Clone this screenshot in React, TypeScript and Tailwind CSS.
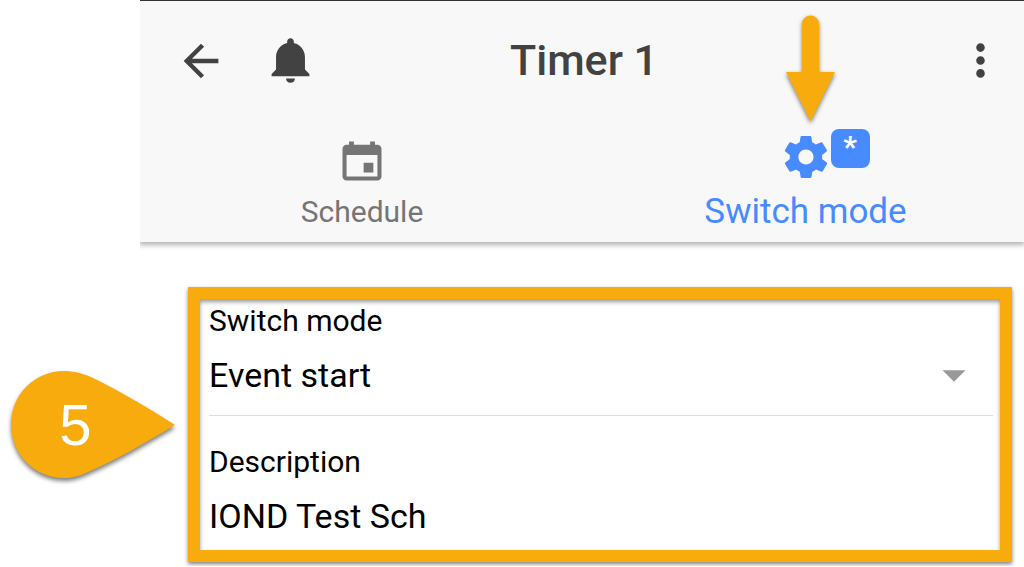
import React, { useState } from 'react';
import {
  IoMdArrowBack,
  IoMdArrowDropdown,
  IoMdCalendar,
  IoMdMore,
  IoMdNotifications,
  IoMdSettings,
} from 'react-icons/io';

const MODES = ['Event start', 'Event end', 'Event start and end'];

function Pointer() {
  return (
    <svg
      className="absolute top-3 right-[184px] h-[116px] w-[58px] drop-shadow-[0_2px_2px_rgba(0,0,0,0.5)]"
      viewBox="0 0 58 116"
      fill="#f8ab0c"
      aria-hidden="true"
    >
      <path d="M20 59V11a8.500 8.500 0 0 1 17 0v48h16L28.500 108.500 4 59z" />
    </svg>
  );
}

function StepMarker({ step }: { step: number }) {
  return (
    <div className="relative z-10 flex h-[110px] w-[166px] shrink-0 items-center">
      <svg
        className="absolute inset-0 h-full w-full drop-shadow-[0_3px_2px_rgba(0,0,0,0.5)]"
        viewBox="0 0 166 110"
        fill="#f8ab0c"
        aria-hidden="true"
      >
        <path d="M54 1C24 1 1 25 1 54.500S24 108 54 108c8 0 15-2 24-6 30-13 57-29 87-47C137 37 106 19 81 7 71 3 63 1 54 1z" />
      </svg>
      <span className="relative w-[131px] text-center font-['Liberation_Sans',sans-serif] text-[58px] leading-none text-white">
        {step}
      </span>
    </div>
  );
}

export default function App() {
  const [tab, setTab] = useState('mode');
  const [mode, setMode] = useState(MODES[0]);
  const [description, setDescription] = useState('IOND Test Sch');

  const tabColor = (name: string) => (tab === name ? 'text-[#488aff]' : 'text-[#757575]');

  return (
    <div className="flex bg-white font-[Roboto,sans-serif] text-black">
      <aside className="w-[140px] shrink-0 pt-[370px] pl-[10px]">
        <StepMarker step={5} />
      </aside>

      <main className="min-w-0 flex-1 overflow-hidden pb-1">
        <header className="relative border-t border-[#333] bg-[#f8f8f8] shadow-[0_2px_5px_1px_rgba(0,0,0,0.3)]">
          <div className="grid h-[119px] grid-cols-[1fr_auto_1fr] items-center pr-4 pl-5 text-[#424242]">
            <div className="flex items-center gap-9 pl-[15px]">
              <button type="button" aria-label="Back">
                <IoMdArrowBack className="size-[52px]" />
              </button>
              <button type="button" aria-label="Notifications">
                <IoMdNotifications className="size-[55px]" />
              </button>
            </div>
            <h1 className="text-[43px] leading-none font-medium">Timer 1</h1>
            <button type="button" aria-label="More" className="justify-self-end">
              <IoMdMore className="size-[55px]" />
            </button>
          </div>

          <nav className="grid h-[122px] grid-cols-2">
            <button
              type="button"
              onClick={() => setTab('schedule')}
              className={`flex flex-col items-center justify-start pt-[15px] pl-0.5 ${tabColor('schedule')}`}
            >
              <IoMdCalendar className="size-[52px]" />
              <span className="mt-[7px] text-[30px] leading-9">Schedule</span>
            </button>
            <button
              type="button"
              onClick={() => setTab('mode')}
              className={`flex flex-col items-center justify-start pt-[11px] pl-[5px] ${tabColor('mode')}`}
            >
              <span className="relative">
                <IoMdSettings className="size-[52px]" />
                <span className="absolute -top-0.5 left-[51px] flex h-[39px] w-[39px] justify-center rounded-lg bg-[#488aff] text-[30px] leading-9 font-bold text-white">
                  *
                </span>
              </span>
              <span className="mt-[9px] text-[35px] leading-10">Switch mode</span>
            </button>
          </nav>
          <Pointer />
        </header>

        <form className="mt-[45px] mr-3 ml-12 border-12 border-[#f8ab0c] pr-[7px] pl-[9px] shadow-[0_2px_4px_rgba(0,0,0,0.5),inset_0_3px_4px_rgba(0,0,0,0.4)]">
          <div className="border-b border-[#dedede] pt-1 pb-4">
            <label htmlFor="mode" className="block text-[30px] leading-9">
              Switch mode
            </label>
            <div className="relative mt-3">
              <select
                id="mode"
                value={mode}
                onChange={(e) => setMode(e.target.value)}
                className="block h-12 w-full appearance-none bg-transparent text-[34px] leading-10 outline-none"
              >
                {MODES.map((m) => (
                  <option key={m}>{m}</option>
                ))}
              </select>
              <IoMdArrowDropdown className="pointer-events-none absolute top-0.5 right-4 size-[46px] text-[#999]" />
            </div>
          </div>
          <div className="pt-7 pb-[10px]">
            <label htmlFor="description" className="block text-[30px] leading-9">
              Description
            </label>
            <input
              id="description"
              type="text"
              value={description}
              onChange={(e) => setDescription(e.target.value)}
              className="mt-3 block h-12 w-full bg-transparent text-[34px] leading-10 outline-none"
            />
          </div>
        </form>
      </main>
    </div>
  );
}
